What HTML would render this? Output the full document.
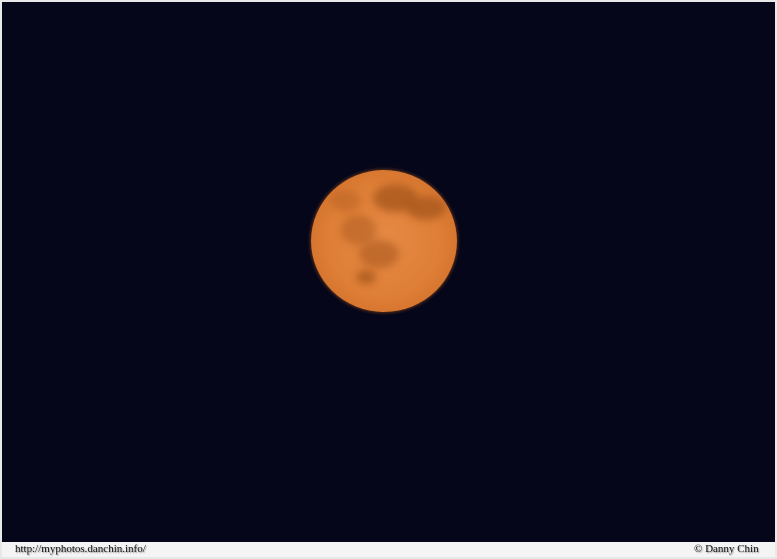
<!DOCTYPE html>
<html><head><style>
html,body{margin:0;padding:0;}
body{width:777px;height:559px;background:#e8e8e8;position:relative;overflow:hidden;font-family:"Liberation Serif",serif;}
.photo{position:absolute;left:2px;top:2px;width:773px;height:540px;background:#05061a;}
.moon{position:absolute;left:309px;top:168px;width:146px;height:142px;border-radius:50%;
background:radial-gradient(circle at 50% 50%,#e58a45 0%,#df7f36 55%,#cf6e28 85%,#a85618 100%);
box-shadow:0 0 3px 1px rgba(180,90,30,.5);overflow:hidden;}
.c{position:absolute;border-radius:50%;background:#a9581f;filter:blur(4px);opacity:.8;}
.strip{position:absolute;left:2px;top:542px;width:773px;height:15px;background:#f4f4f4;}
.t{position:absolute;top:543px;font-size:11px;color:#111;text-shadow:1px 1px 1px #999;}
</style></head><body>
<div class="photo">
<div class="moon">
<div class="c" style="left:62px;top:14px;width:45px;height:28px"></div>
<div class="c" style="left:95px;top:26px;width:40px;height:24px"></div>
<div class="c" style="left:30px;top:45px;width:35px;height:30px;opacity:.5"></div>
<div class="c" style="left:48px;top:70px;width:40px;height:28px;opacity:.6"></div>
<div class="c" style="left:45px;top:100px;width:20px;height:14px"></div>
<div class="c" style="left:20px;top:20px;width:30px;height:22px;opacity:.4"></div>
</div>
</div>
<div class="strip"></div>
<div class="t" style="left:15px">http://myphotos.danchin.info/</div>
<div class="t" style="left:694px">© Danny Chin</div>
</body></html>
